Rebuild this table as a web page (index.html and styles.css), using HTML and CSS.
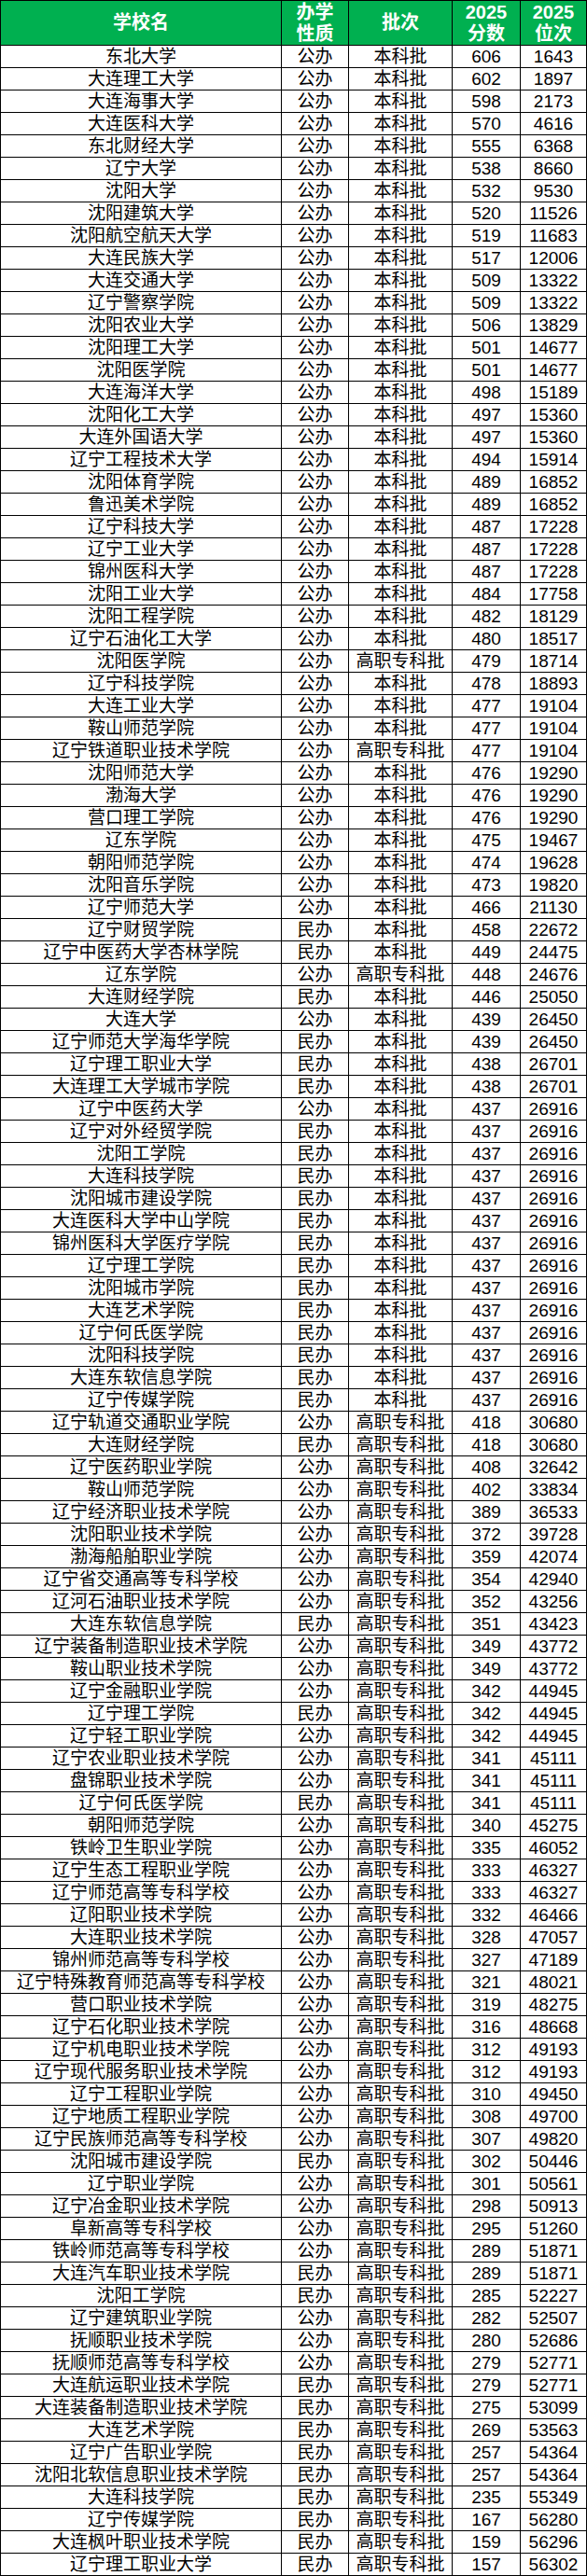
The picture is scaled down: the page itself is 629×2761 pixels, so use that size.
FILE: index.html
```html
<!DOCTYPE html>
<html lang="zh-CN">
<head>
<meta charset="utf-8">
<title>2025 分数位次</title>
<link rel="stylesheet" href="styles.css">
</head>
<body>
<table class="score-table">
<colgroup>
<col class="c-name"><col class="c-type"><col class="c-batch"><col class="c-score"><col class="c-rank">
</colgroup>
<thead>
<tr class="head-row"><th>学校名</th><th>办学<br>性质</th><th>批次</th><th>2025<br>分数</th><th>2025<br>位次</th></tr>
</thead>
<tbody>
<tr><td>东北大学</td><td>公办</td><td>本科批</td><td>606</td><td>1643</td></tr>
<tr><td>大连理工大学</td><td>公办</td><td>本科批</td><td>602</td><td>1897</td></tr>
<tr><td>大连海事大学</td><td>公办</td><td>本科批</td><td>598</td><td>2173</td></tr>
<tr><td>大连医科大学</td><td>公办</td><td>本科批</td><td>570</td><td>4616</td></tr>
<tr><td>东北财经大学</td><td>公办</td><td>本科批</td><td>555</td><td>6368</td></tr>
<tr><td>辽宁大学</td><td>公办</td><td>本科批</td><td>538</td><td>8660</td></tr>
<tr><td>沈阳大学</td><td>公办</td><td>本科批</td><td>532</td><td>9530</td></tr>
<tr><td>沈阳建筑大学</td><td>公办</td><td>本科批</td><td>520</td><td>11526</td></tr>
<tr><td>沈阳航空航天大学</td><td>公办</td><td>本科批</td><td>519</td><td>11683</td></tr>
<tr><td>大连民族大学</td><td>公办</td><td>本科批</td><td>517</td><td>12006</td></tr>
<tr><td>大连交通大学</td><td>公办</td><td>本科批</td><td>509</td><td>13322</td></tr>
<tr><td>辽宁警察学院</td><td>公办</td><td>本科批</td><td>509</td><td>13322</td></tr>
<tr><td>沈阳农业大学</td><td>公办</td><td>本科批</td><td>506</td><td>13829</td></tr>
<tr><td>沈阳理工大学</td><td>公办</td><td>本科批</td><td>501</td><td>14677</td></tr>
<tr><td>沈阳医学院</td><td>公办</td><td>本科批</td><td>501</td><td>14677</td></tr>
<tr><td>大连海洋大学</td><td>公办</td><td>本科批</td><td>498</td><td>15189</td></tr>
<tr><td>沈阳化工大学</td><td>公办</td><td>本科批</td><td>497</td><td>15360</td></tr>
<tr><td>大连外国语大学</td><td>公办</td><td>本科批</td><td>497</td><td>15360</td></tr>
<tr><td>辽宁工程技术大学</td><td>公办</td><td>本科批</td><td>494</td><td>15914</td></tr>
<tr><td>沈阳体育学院</td><td>公办</td><td>本科批</td><td>489</td><td>16852</td></tr>
<tr><td>鲁迅美术学院</td><td>公办</td><td>本科批</td><td>489</td><td>16852</td></tr>
<tr><td>辽宁科技大学</td><td>公办</td><td>本科批</td><td>487</td><td>17228</td></tr>
<tr><td>辽宁工业大学</td><td>公办</td><td>本科批</td><td>487</td><td>17228</td></tr>
<tr><td>锦州医科大学</td><td>公办</td><td>本科批</td><td>487</td><td>17228</td></tr>
<tr><td>沈阳工业大学</td><td>公办</td><td>本科批</td><td>484</td><td>17758</td></tr>
<tr><td>沈阳工程学院</td><td>公办</td><td>本科批</td><td>482</td><td>18129</td></tr>
<tr><td>辽宁石油化工大学</td><td>公办</td><td>本科批</td><td>480</td><td>18517</td></tr>
<tr><td>沈阳医学院</td><td>公办</td><td>高职专科批</td><td>479</td><td>18714</td></tr>
<tr><td>辽宁科技学院</td><td>公办</td><td>本科批</td><td>478</td><td>18893</td></tr>
<tr><td>大连工业大学</td><td>公办</td><td>本科批</td><td>477</td><td>19104</td></tr>
<tr><td>鞍山师范学院</td><td>公办</td><td>本科批</td><td>477</td><td>19104</td></tr>
<tr><td>辽宁铁道职业技术学院</td><td>公办</td><td>高职专科批</td><td>477</td><td>19104</td></tr>
<tr><td>沈阳师范大学</td><td>公办</td><td>本科批</td><td>476</td><td>19290</td></tr>
<tr><td>渤海大学</td><td>公办</td><td>本科批</td><td>476</td><td>19290</td></tr>
<tr><td>营口理工学院</td><td>公办</td><td>本科批</td><td>476</td><td>19290</td></tr>
<tr><td>辽东学院</td><td>公办</td><td>本科批</td><td>475</td><td>19467</td></tr>
<tr><td>朝阳师范学院</td><td>公办</td><td>本科批</td><td>474</td><td>19628</td></tr>
<tr><td>沈阳音乐学院</td><td>公办</td><td>本科批</td><td>473</td><td>19820</td></tr>
<tr><td>辽宁师范大学</td><td>公办</td><td>本科批</td><td>466</td><td>21130</td></tr>
<tr><td>辽宁财贸学院</td><td>民办</td><td>本科批</td><td>458</td><td>22672</td></tr>
<tr><td>辽宁中医药大学杏林学院</td><td>民办</td><td>本科批</td><td>449</td><td>24475</td></tr>
<tr><td>辽东学院</td><td>公办</td><td>高职专科批</td><td>448</td><td>24676</td></tr>
<tr><td>大连财经学院</td><td>民办</td><td>本科批</td><td>446</td><td>25050</td></tr>
<tr><td>大连大学</td><td>公办</td><td>本科批</td><td>439</td><td>26450</td></tr>
<tr><td>辽宁师范大学海华学院</td><td>民办</td><td>本科批</td><td>439</td><td>26450</td></tr>
<tr><td>辽宁理工职业大学</td><td>民办</td><td>本科批</td><td>438</td><td>26701</td></tr>
<tr><td>大连理工大学城市学院</td><td>民办</td><td>本科批</td><td>438</td><td>26701</td></tr>
<tr><td>辽宁中医药大学</td><td>公办</td><td>本科批</td><td>437</td><td>26916</td></tr>
<tr><td>辽宁对外经贸学院</td><td>民办</td><td>本科批</td><td>437</td><td>26916</td></tr>
<tr><td>沈阳工学院</td><td>民办</td><td>本科批</td><td>437</td><td>26916</td></tr>
<tr><td>大连科技学院</td><td>民办</td><td>本科批</td><td>437</td><td>26916</td></tr>
<tr><td>沈阳城市建设学院</td><td>民办</td><td>本科批</td><td>437</td><td>26916</td></tr>
<tr><td>大连医科大学中山学院</td><td>民办</td><td>本科批</td><td>437</td><td>26916</td></tr>
<tr><td>锦州医科大学医疗学院</td><td>民办</td><td>本科批</td><td>437</td><td>26916</td></tr>
<tr><td>辽宁理工学院</td><td>民办</td><td>本科批</td><td>437</td><td>26916</td></tr>
<tr><td>沈阳城市学院</td><td>民办</td><td>本科批</td><td>437</td><td>26916</td></tr>
<tr><td>大连艺术学院</td><td>民办</td><td>本科批</td><td>437</td><td>26916</td></tr>
<tr><td>辽宁何氏医学院</td><td>民办</td><td>本科批</td><td>437</td><td>26916</td></tr>
<tr><td>沈阳科技学院</td><td>民办</td><td>本科批</td><td>437</td><td>26916</td></tr>
<tr><td>大连东软信息学院</td><td>民办</td><td>本科批</td><td>437</td><td>26916</td></tr>
<tr><td>辽宁传媒学院</td><td>民办</td><td>本科批</td><td>437</td><td>26916</td></tr>
<tr><td>辽宁轨道交通职业学院</td><td>公办</td><td>高职专科批</td><td>418</td><td>30680</td></tr>
<tr><td>大连财经学院</td><td>民办</td><td>高职专科批</td><td>418</td><td>30680</td></tr>
<tr><td>辽宁医药职业学院</td><td>公办</td><td>高职专科批</td><td>408</td><td>32642</td></tr>
<tr><td>鞍山师范学院</td><td>公办</td><td>高职专科批</td><td>402</td><td>33834</td></tr>
<tr><td>辽宁经济职业技术学院</td><td>公办</td><td>高职专科批</td><td>389</td><td>36533</td></tr>
<tr><td>沈阳职业技术学院</td><td>公办</td><td>高职专科批</td><td>372</td><td>39728</td></tr>
<tr><td>渤海船舶职业学院</td><td>公办</td><td>高职专科批</td><td>359</td><td>42074</td></tr>
<tr><td>辽宁省交通高等专科学校</td><td>公办</td><td>高职专科批</td><td>354</td><td>42940</td></tr>
<tr><td>辽河石油职业技术学院</td><td>公办</td><td>高职专科批</td><td>352</td><td>43256</td></tr>
<tr><td>大连东软信息学院</td><td>民办</td><td>高职专科批</td><td>351</td><td>43423</td></tr>
<tr><td>辽宁装备制造职业技术学院</td><td>公办</td><td>高职专科批</td><td>349</td><td>43772</td></tr>
<tr><td>鞍山职业技术学院</td><td>公办</td><td>高职专科批</td><td>349</td><td>43772</td></tr>
<tr><td>辽宁金融职业学院</td><td>公办</td><td>高职专科批</td><td>342</td><td>44945</td></tr>
<tr><td>辽宁理工学院</td><td>民办</td><td>高职专科批</td><td>342</td><td>44945</td></tr>
<tr><td>辽宁轻工职业学院</td><td>公办</td><td>高职专科批</td><td>342</td><td>44945</td></tr>
<tr><td>辽宁农业职业技术学院</td><td>公办</td><td>高职专科批</td><td>341</td><td>45111</td></tr>
<tr><td>盘锦职业技术学院</td><td>公办</td><td>高职专科批</td><td>341</td><td>45111</td></tr>
<tr><td>辽宁何氏医学院</td><td>民办</td><td>高职专科批</td><td>341</td><td>45111</td></tr>
<tr><td>朝阳师范学院</td><td>公办</td><td>高职专科批</td><td>340</td><td>45275</td></tr>
<tr><td>铁岭卫生职业学院</td><td>公办</td><td>高职专科批</td><td>335</td><td>46052</td></tr>
<tr><td>辽宁生态工程职业学院</td><td>公办</td><td>高职专科批</td><td>333</td><td>46327</td></tr>
<tr><td>辽宁师范高等专科学校</td><td>公办</td><td>高职专科批</td><td>333</td><td>46327</td></tr>
<tr><td>辽阳职业技术学院</td><td>公办</td><td>高职专科批</td><td>332</td><td>46466</td></tr>
<tr><td>大连职业技术学院</td><td>公办</td><td>高职专科批</td><td>328</td><td>47057</td></tr>
<tr><td>锦州师范高等专科学校</td><td>公办</td><td>高职专科批</td><td>327</td><td>47189</td></tr>
<tr><td>辽宁特殊教育师范高等专科学校</td><td>公办</td><td>高职专科批</td><td>321</td><td>48021</td></tr>
<tr><td>营口职业技术学院</td><td>公办</td><td>高职专科批</td><td>319</td><td>48275</td></tr>
<tr><td>辽宁石化职业技术学院</td><td>公办</td><td>高职专科批</td><td>316</td><td>48668</td></tr>
<tr><td>辽宁机电职业技术学院</td><td>公办</td><td>高职专科批</td><td>312</td><td>49193</td></tr>
<tr><td>辽宁现代服务职业技术学院</td><td>公办</td><td>高职专科批</td><td>312</td><td>49193</td></tr>
<tr><td>辽宁工程职业学院</td><td>公办</td><td>高职专科批</td><td>310</td><td>49450</td></tr>
<tr><td>辽宁地质工程职业学院</td><td>公办</td><td>高职专科批</td><td>308</td><td>49700</td></tr>
<tr><td>辽宁民族师范高等专科学校</td><td>公办</td><td>高职专科批</td><td>307</td><td>49820</td></tr>
<tr><td>沈阳城市建设学院</td><td>民办</td><td>高职专科批</td><td>302</td><td>50446</td></tr>
<tr><td>辽宁职业学院</td><td>公办</td><td>高职专科批</td><td>301</td><td>50561</td></tr>
<tr><td>辽宁冶金职业技术学院</td><td>公办</td><td>高职专科批</td><td>298</td><td>50913</td></tr>
<tr><td>阜新高等专科学校</td><td>公办</td><td>高职专科批</td><td>295</td><td>51260</td></tr>
<tr><td>铁岭师范高等专科学校</td><td>公办</td><td>高职专科批</td><td>289</td><td>51871</td></tr>
<tr><td>大连汽车职业技术学院</td><td>民办</td><td>高职专科批</td><td>289</td><td>51871</td></tr>
<tr><td>沈阳工学院</td><td>民办</td><td>高职专科批</td><td>285</td><td>52227</td></tr>
<tr><td>辽宁建筑职业学院</td><td>公办</td><td>高职专科批</td><td>282</td><td>52507</td></tr>
<tr><td>抚顺职业技术学院</td><td>公办</td><td>高职专科批</td><td>280</td><td>52686</td></tr>
<tr><td>抚顺师范高等专科学校</td><td>公办</td><td>高职专科批</td><td>279</td><td>52771</td></tr>
<tr><td>大连航运职业技术学院</td><td>民办</td><td>高职专科批</td><td>279</td><td>52771</td></tr>
<tr><td>大连装备制造职业技术学院</td><td>民办</td><td>高职专科批</td><td>275</td><td>53099</td></tr>
<tr><td>大连艺术学院</td><td>民办</td><td>高职专科批</td><td>269</td><td>53563</td></tr>
<tr><td>辽宁广告职业学院</td><td>民办</td><td>高职专科批</td><td>257</td><td>54364</td></tr>
<tr><td>沈阳北软信息职业技术学院</td><td>民办</td><td>高职专科批</td><td>257</td><td>54364</td></tr>
<tr><td>大连科技学院</td><td>民办</td><td>高职专科批</td><td>235</td><td>55349</td></tr>
<tr><td>辽宁传媒学院</td><td>民办</td><td>高职专科批</td><td>167</td><td>56280</td></tr>
<tr><td>大连枫叶职业技术学院</td><td>民办</td><td>高职专科批</td><td>159</td><td>56296</td></tr>
<tr><td>辽宁理工职业大学</td><td>民办</td><td>高职专科批</td><td>157</td><td>56302</td></tr>
</tbody>
</table>
</body>
</html>
```
FILE: styles.css
```css
html, body {
  margin: 0;
  padding: 0;
  background: #ffffff;
}

body {
  font-family: "Liberation Sans", "Noto Sans CJK SC", sans-serif;
  color: #000000;
}

.score-table {
  border-collapse: collapse;
  table-layout: fixed;
  width: 628px;
}

.c-name { width: 301px; }
.c-type { width: 72px; }
.c-batch { width: 111px; }
.c-score { width: 73px; }
.c-rank { width: 71px; }

.score-table th,
.score-table td {
  border: 1px solid #000000;
  padding: 0;
  text-align: center;
  white-space: nowrap;
  overflow: hidden;
}

.score-table th {
  background: #00b050;
  color: #ffffff;
  font-weight: bold;
  font-size: 20px;
  line-height: 23px;
  height: 47px;
}

.score-table td {
  font-size: 19px;
  line-height: 22px;
  height: 22px;
  padding-top: 1px;
}
```
